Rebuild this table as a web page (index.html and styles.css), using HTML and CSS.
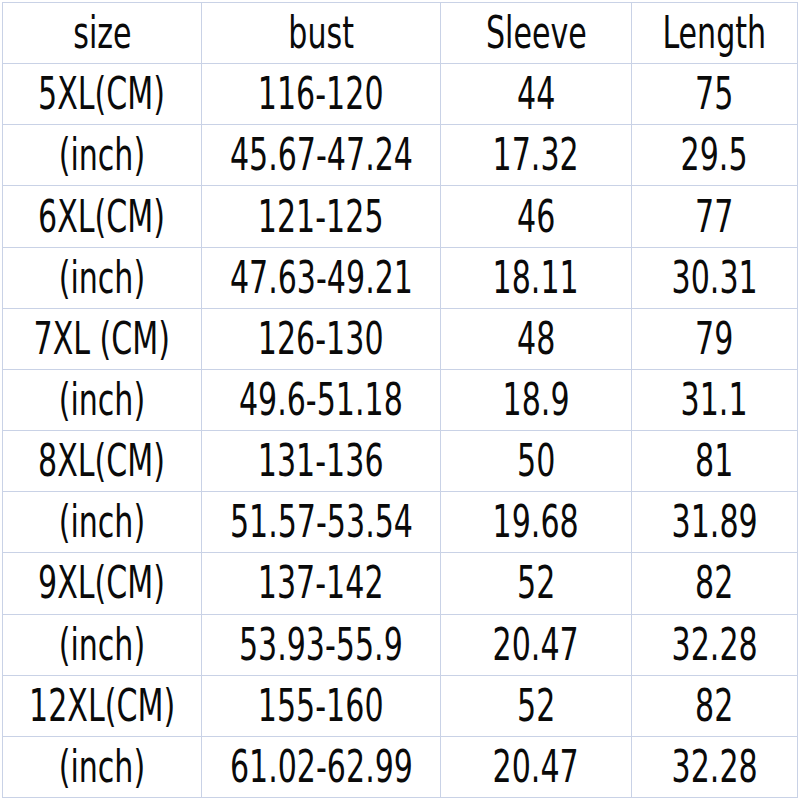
FILE: index.html
```html
<!DOCTYPE html>
<html>
<head>
<meta charset="utf-8">
<link rel="stylesheet" href="styles.css">
</head>
<body>
<div class="table">
  <div class="cell"><span>size</span></div><div class="cell"><span>bust</span></div><div class="cell"><span>Sleeve</span></div><div class="cell"><span>Length</span></div>
  <div class="cell"><span>5XL(CM)</span></div><div class="cell"><span>116-120</span></div><div class="cell"><span>44</span></div><div class="cell"><span>75</span></div>
  <div class="cell"><span>(inch)</span></div><div class="cell"><span>45.67-47.24</span></div><div class="cell"><span>17.32</span></div><div class="cell"><span>29.5</span></div>
  <div class="cell"><span>6XL(CM)</span></div><div class="cell"><span>121-125</span></div><div class="cell"><span>46</span></div><div class="cell"><span>77</span></div>
  <div class="cell"><span>(inch)</span></div><div class="cell"><span>47.63-49.21</span></div><div class="cell"><span>18.11</span></div><div class="cell"><span>30.31</span></div>
  <div class="cell"><span>7XL (CM)</span></div><div class="cell"><span>126-130</span></div><div class="cell"><span>48</span></div><div class="cell"><span>79</span></div>
  <div class="cell"><span>(inch)</span></div><div class="cell"><span>49.6-51.18</span></div><div class="cell"><span>18.9</span></div><div class="cell"><span>31.1</span></div>
  <div class="cell"><span>8XL(CM)</span></div><div class="cell"><span>131-136</span></div><div class="cell"><span>50</span></div><div class="cell"><span>81</span></div>
  <div class="cell"><span>(inch)</span></div><div class="cell"><span>51.57-53.54</span></div><div class="cell"><span>19.68</span></div><div class="cell"><span>31.89</span></div>
  <div class="cell"><span>9XL(CM)</span></div><div class="cell"><span>137-142</span></div><div class="cell"><span>52</span></div><div class="cell"><span>82</span></div>
  <div class="cell"><span>(inch)</span></div><div class="cell"><span>53.93-55.9</span></div><div class="cell"><span>20.47</span></div><div class="cell"><span>32.28</span></div>
  <div class="cell"><span>12XL(CM)</span></div><div class="cell"><span>155-160</span></div><div class="cell"><span>52</span></div><div class="cell"><span>82</span></div>
  <div class="cell"><span>(inch)</span></div><div class="cell"><span>61.02-62.99</span></div><div class="cell"><span>20.47</span></div><div class="cell"><span>32.28</span></div>
</div>
</body>
</html>
```
FILE: styles.css
```css
html, body {
  margin: 0;
  padding: 0;
  background: #ffffff;
}
body {
  width: 800px;
  height: 800px;
  overflow: hidden;
}
.table {
  margin: 2px 0 0 2px;
  width: 796px;
  height: 796px;
  box-sizing: border-box;
  padding: 1px;
  display: grid;
  grid-template-columns: 198px 238px 190px 165px;
  grid-template-rows: repeat(13, 1fr);
  gap: 1px;
  background: #c9d2e6;
}
.cell {
  background: #ffffff;
  display: flex;
  align-items: center;
  justify-content: center;
  overflow: hidden;
}
.cell span {
  display: inline-block;
  font-family: "DejaVu Sans Condensed", "DejaVu Sans", sans-serif;
  font-stretch: condensed;
  font-size: 44px;
  line-height: 1;
  color: #0a0a0a;
  white-space: pre;
  transform: scaleX(0.76);
}
```
